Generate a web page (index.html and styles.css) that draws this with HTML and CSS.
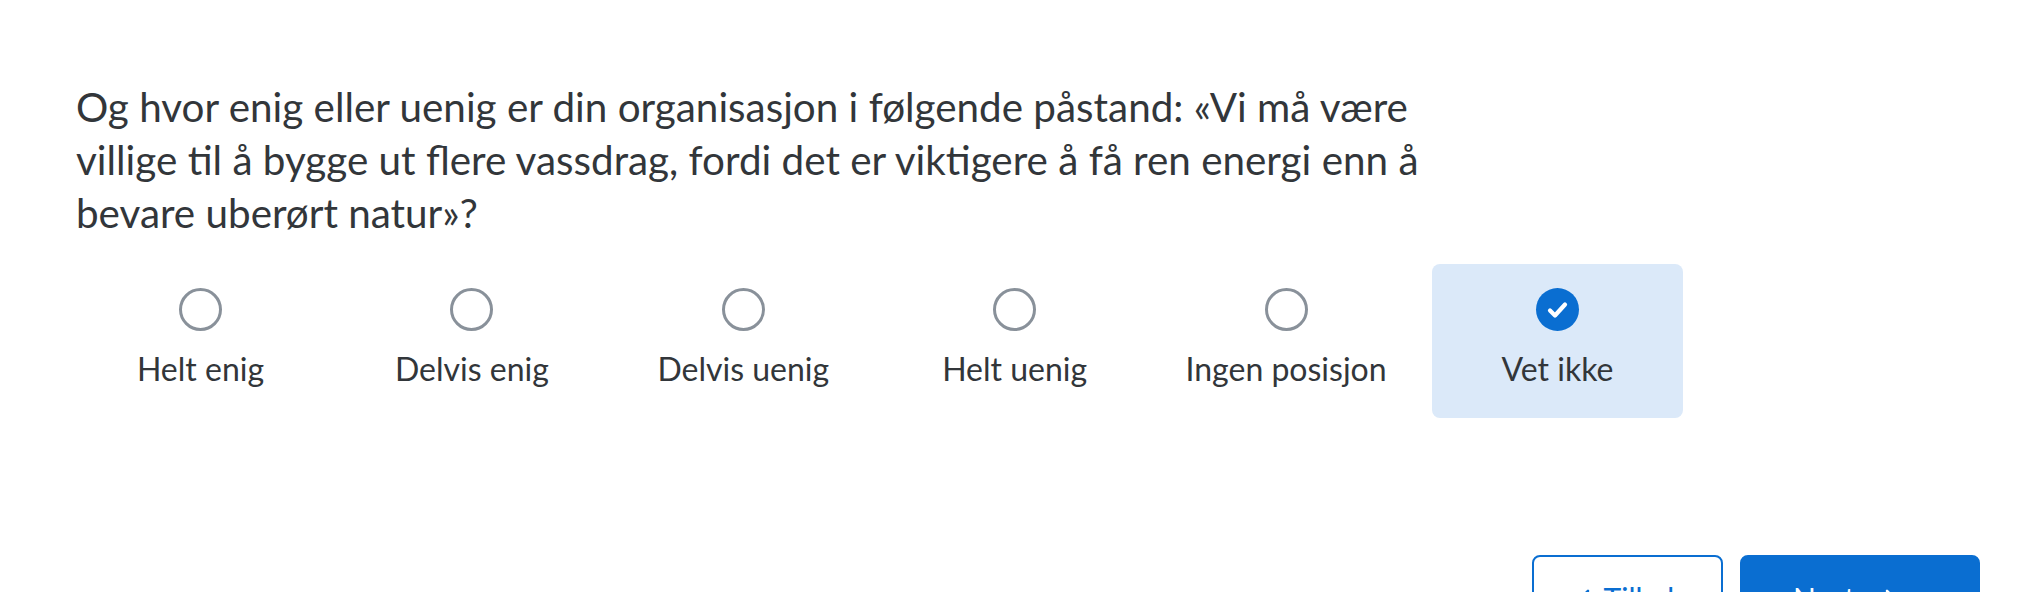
FILE: index.html
```html
<!DOCTYPE html>
<html lang="no">
<head>
    <meta charset="UTF-8">
    <meta name="viewport" content="width=device-width, initial-scale=1.0">
    <title>Spørsmål</title>
    <link rel="stylesheet" href="styles.css">
</head>
<body>
    <div class="survey">
        <p class="question">Og hvor enig eller uenig er din organisasjon i følgende påstand: «Vi må være villige til å bygge ut flere vassdrag, fordi det er viktigere å få ren energi enn å bevare uberørt natur»?</p>

        <div class="choices">
            <label class="choice">
                <span class="radio"></span>
                <span class="choice-text">Helt enig</span>
            </label>
            <label class="choice">
                <span class="radio"></span>
                <span class="choice-text">Delvis enig</span>
            </label>
            <label class="choice">
                <span class="radio"></span>
                <span class="choice-text">Delvis uenig</span>
            </label>
            <label class="choice">
                <span class="radio"></span>
                <span class="choice-text">Helt uenig</span>
            </label>
            <label class="choice">
                <span class="radio"></span>
                <span class="choice-text">Ingen posisjon</span>
            </label>
            <label class="choice selected">
                <span class="radio">
                    <svg viewBox="0 0 43 43" width="43" height="43">
                        <path d="M14 22.5 L19 27.5 L29 16.5" fill="none" stroke="#fff" stroke-width="4.2" stroke-linecap="round" stroke-linejoin="round"/>
                    </svg>
                </span>
                <span class="choice-text">Vet ikke</span>
            </label>
        </div>

        <div class="nav">
            <button class="btn btn-back">
                <svg viewBox="0 0 12 20" width="12" height="20">
                    <path d="M10 2 L2 10 L10 18" fill="none" stroke="currentColor" stroke-width="2.6" stroke-linecap="round" stroke-linejoin="round"/>
                </svg>
                Tilbake
            </button>
            <button class="btn btn-next">
                Neste
                <svg viewBox="0 0 12 20" width="12" height="20">
                    <path d="M2 2 L10 10 L2 18" fill="none" stroke="currentColor" stroke-width="2.6" stroke-linecap="round" stroke-linejoin="round"/>
                </svg>
            </button>
        </div>
    </div>
</body>
</html>
```

FILE: styles.css
```css
body {
    margin: 0;
    font-family: 'Lato', 'Liberation Sans', sans-serif;
    color: #32363a;
    background: #fff;
    overflow: hidden;
}

.survey {
    padding: 80px 50px 0 76px;
}

.question {
    margin: 0;
    max-width: 1362px;
    font-size: 40.4px;
    line-height: 53px;
}

.choices {
    display: grid;
    grid-template-columns: repeat(6, 251px);
    column-gap: 20.4px;
    margin-top: 25px;
    margin-left: -1px;
}

.choice {
    display: flex;
    flex-direction: column;
    align-items: center;
    padding: 24px 10px 30px;
    border-radius: 8px;
    cursor: pointer;
}

.choice.selected {
    background: #dbe9f9;
}

.radio {
    box-sizing: border-box;
    width: 43px;
    height: 43px;
    border: 3.5px solid #89919a;
    border-radius: 50%;
    background: #fff;
}

.choice.selected .radio {
    border: none;
    background: #0a6ed1;
}

.radio svg {
    display: block;
}

.choice-text {
    margin-top: 19px;
    font-size: 32px;
    line-height: 38px;
    white-space: nowrap;
}

.nav {
    display: flex;
    justify-content: flex-end;
    gap: 17px;
    margin-top: 137px;
}

.btn {
    display: flex;
    align-items: flex-start;
    justify-content: center;
    gap: 14px;
    height: 80px;
    padding: 23px 0;
    border-radius: 8px;
    font-family: inherit;
    font-size: 30px;
    line-height: 36px;
    cursor: pointer;
}

.btn svg {
    margin-top: 9px;
}

.btn-back {
    width: 191px;
    padding-left: 20px;
    border: 2px solid #0a6ed1;
    background: #fff;
    color: #0a6ed1;
}

.btn-next {
    width: 240px;
    padding-right: 30px;
    border: 2px solid #0a6ed1;
    background: #0a6ed1;
    color: #fff;
}
```
